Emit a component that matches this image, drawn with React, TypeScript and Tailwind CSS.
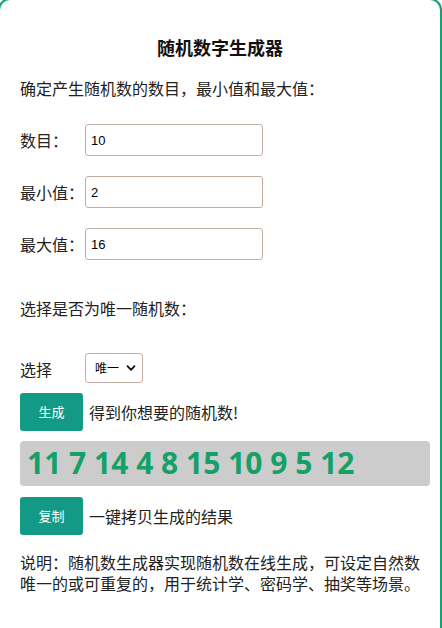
import React from "react";

const cjk = { fontFamily: '"Noto Sans CJK SC", "Noto Sans", sans-serif' };

function Field({ label, value }: { label: string; value: string }) {
  return (
    <div className="flex items-center h-[32px]">
      <div className="w-[65px] text-[16px] leading-[24px] text-[#222]">{label}</div>
      <input
        readOnly
        value={value}
        className="w-[178px] h-[32px] border border-[#c2ada3] rounded-[3px] px-[5px] text-[13px] text-black outline-none bg-white"
        style={{ fontFamily: '"Liberation Sans", Arial, sans-serif' }}
      />
    </div>
  );
}

export default function App() {
  return (
    <div className="w-[442px] h-[628px] overflow-hidden bg-white" style={cjk}>
      <div className="-mt-[2px] -ml-[2px] w-[444px] min-h-[660px] border-2 border-[#17a070] rounded-[12px] pl-[20px] pr-[10px] pt-[35px] bg-white">
        <div className="pr-[10px] text-center text-[18px] leading-[24px] font-bold text-[#111]">
          随机数字生成器
        </div>
        <div className="mt-[17px] text-[16px] leading-[24px] text-[#222]">
          确定产生随机数的数目，最小值和最大值：
        </div>
        <div className="mt-[24px] flex flex-col gap-[20px]">
          <Field label="数目：" value="10" />
          <Field label="最小值：" value="2" />
          <Field label="最大值：" value="16" />
        </div>
        <div className="mt-[36px] text-[16px] leading-[24px] text-[#222]">
          选择是否为唯一随机数：
        </div>
        <div className="mt-[33px] flex items-center h-[30px]">
          <div className="w-[65px] text-[16px] leading-[24px] text-[#222] pt-[1px]">选择</div>
          <div className="w-[58px] h-[30px] border border-[#c9aea3] rounded-[3px] flex items-center justify-between pl-[9px] pr-[6px] bg-white">
            <span className="text-[12px] leading-[16px] text-black">唯一</span>
            <svg width="10" height="10" viewBox="0 0 10 10">
              <path d="M1.5 3.2 L5 6.8 L8.5 3.2" fill="none" stroke="#111" strokeWidth="1.8" strokeLinecap="round" strokeLinejoin="round" />
            </svg>
          </div>
        </div>
        <div className="mt-[10px] flex items-center gap-[6px]">
          <button className="w-[63px] h-[38px] bg-[#129a86] rounded-[3px] text-white text-[13px]">生成</button>
          <span className="text-[16px] leading-[24px] text-[#222]">得到你想要的随机数!</span>
        </div>
        <div className="mt-[10px] h-[45px] bg-[#cccccc] rounded-[4px] flex items-center pl-[7px]">
          <span
            className="text-[30px] font-bold text-[#15a06a] leading-none -mt-[2px]"
            style={{ fontFamily: '"Open Sans", sans-serif' }}
          >
            11 7 14 4 8 15 10 9 5 12
          </span>
        </div>
        <div className="mt-[11px] flex items-center gap-[6px]">
          <button className="w-[63px] h-[38px] bg-[#129a86] rounded-[3px] text-white text-[13px]">复制</button>
          <span className="text-[16px] leading-[24px] text-[#222]">一键拷贝生成的结果</span>
        </div>
        <div className="mt-[17px] text-[16px] leading-[21px] text-[#222]">
          说明：随机数生成器实现随机数在线生成，可设定自然数唯一的或可重复的，用于统计学、密码学、抽奖等场景。
        </div>
      </div>
    </div>
  );
}
